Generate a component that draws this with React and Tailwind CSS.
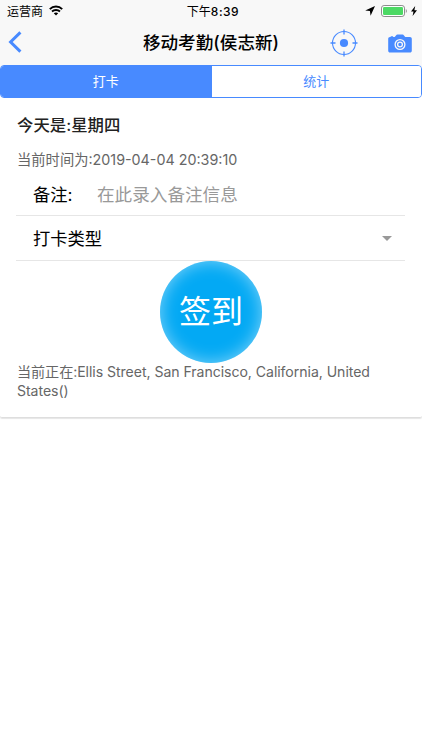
import React, { useState } from "react";

const StatusBar = () => (
  <div className="grid grid-cols-3 items-center h-5 pt-[3px] text-[12px] text-black">
    <div className="flex items-center gap-[6px] pl-[7px]">
      <span>运营商</span>
      <svg width="14" height="11" viewBox="0 0 14 11" fill="none" stroke="#000" strokeWidth="1.9" className="-mt-[3px]">
        <path d="M0.8 4.1C4.2 0.7 9.8 0.7 13.2 4.1" />
        <path d="M3 6.5c2.2-2.1 5.8-2.1 8 0" />
        <path d="M7 10.4 4.8 8.2c1.2-1.1 3.2-1.1 4.4 0z" fill="#000" stroke="none" />
      </svg>
    </div>
    <span className="pl-[4px] text-center whitespace-nowrap">
      下午<span className="font-medium tracking-[0.5px]">8:39</span>
    </span>
    <div className="flex items-center justify-end pr-[5px] -mt-[2px]">
      <svg width="10" height="10" viewBox="0 0 10 10" className="mr-[6px]">
        <path d="M10 0 5.6 9.8 4.9 5.1 0.2 4.5z" fill="#000" />
      </svg>
      <svg width="27" height="12" viewBox="0 0 27 12" className="mr-[3px]">
        <rect x="0.5" y="0.5" width="23" height="11" rx="2.6" fill="#fff" stroke="#8c8c8c" />
        <rect x="2" y="2" width="20" height="8" rx="1.2" fill="#4cd964" />
        <path d="M24.8 4v4c1.4-.6 1.4-3.4 0-4z" fill="#8c8c8c" />
      </svg>
      <svg width="6" height="10" viewBox="0 0 6 10">
        <path d="M4.2 0 0 5.6h2.5L1.6 10 6 4.2H3.4z" fill="#000" />
      </svg>
    </div>
  </div>
);

const NavBar = () => (
  <div className="grid grid-cols-[90px_1fr_90px] items-center h-[45px]">
    <button className="pl-[8px] -mt-[2px]" aria-label="back">
      <svg width="14" height="22" viewBox="0 0 14 22" fill="none">
        <path d="M12.4 1.4 2.6 11l9.8 9.6" stroke="#488aff" strokeWidth="3" />
      </svg>
    </button>
    <h1 className="pt-[2px] text-center text-[17.6px] font-medium text-black whitespace-nowrap">
      移动考勤(侯志新)
    </h1>
    <div className="flex items-center justify-between pr-[9px] pt-[1px]">
      <svg width="28" height="28" viewBox="0 0 28 28" fill="none" stroke="#488aff" className="-ml-[2px]">
        <circle cx="14" cy="14" r="11.5" strokeWidth="1.1" />
        <path d="M14 0.5v5M14 22.5v5M0.5 14h5M22.5 14h5" strokeWidth="1.3" />
        <circle cx="14" cy="14" r="4.1" fill="#488aff" stroke="none" />
      </svg>
      <svg width="24" height="19" viewBox="0 0 24 19" className="mr-[1px]">
        <path
          d="M2 3.1h.7v-.8h2.4v.8h1.6C7.7 2.4 8.2.6 9.5.6h5c1.3 0 1.8 1.8 2.8 2.5H22c1 0 1.8.8 1.8 1.8v11.8c0 1-.8 1.8-1.8 1.8H2c-1 0-1.8-.8-1.8-1.8V4.9c0-1 .8-1.8 1.8-1.8z"
          fill="#488aff"
        />
        <circle cx="12" cy="10.5" r="4.9" fill="none" stroke="#f8f8f8" strokeWidth="1.3" />
        <circle cx="12" cy="10.5" r="2.4" fill="none" stroke="#f8f8f8" strokeWidth="1.3" />
      </svg>
    </div>
  </div>
);

const App = () => {
  const [tab, setTab] = useState("clock");

  const tabClass = (name) =>
    tab === name
      ? "flex-1 bg-[#488aff] text-white"
      : "flex-1 bg-white text-[#488aff] border-l border-[#488aff]";

  return (
    <div className="min-h-[750px] bg-white font-['Inter','Noto_Sans_CJK_SC',sans-serif]">
      {/* HEADER */}
      <div className="bg-[#f8f8f8] h-[65px]">
        <StatusBar />
        <NavBar />
      </div>

      {/* TABS */}
      <div className="bg-linear-to-b from-[#f8f8f8] from-50% to-white to-50%">
        <div className="flex h-[33px] border border-[#488aff] rounded-[4px] overflow-hidden text-[13px]">
          <button className={tabClass("clock")} onClick={() => setTab("clock")}>
            打卡
          </button>
          <button className={tabClass("stats")} onClick={() => setTab("stats")}>
            统计
          </button>
        </div>
      </div>

      {/* CARD */}
      <div className="h-[320px] px-[17px] pt-[15px] rounded-b-[2px] border-b border-[#dedede] shadow-[0_1px_1px_rgba(0,0,0,0.1)]">
        <h2 className="h-6 leading-6 text-[16.4px] font-medium text-[#222]">今天是:星期四</h2>
        <p className="mt-[13px] h-5 leading-5 text-[14.3px] text-[#666]">
          当前时间为:2019-04-04 20:39:10
        </p>

        <div className="-ml-[1px] flex items-center h-[46px] pt-[5px] pl-[17px] border-b border-[#e6e6e6] text-[17.3px]">
          <label className="w-[64px] text-black">备注:</label>
          <input
            type="text"
            placeholder="在此录入备注信息"
            className="flex-1 min-w-0 text-[17.6px] outline-none placeholder:text-[#999]"
          />
        </div>
        <div className="-ml-[1px] flex items-center justify-between h-[45px] pl-[17px] pr-[13px] border-b border-[#e6e6e6] text-[17.3px] text-black">
          <span className="pt-[1px]">打卡类型</span>
          <svg width="10" height="5" viewBox="0 0 10 5">
            <path d="M0 0h10L5 5z" fill="#999" />
          </svg>
        </div>

        <button className="flex items-center justify-center mx-auto -mt-[0.5px] w-[102px] h-[102px] rounded-full bg-[#03a9f4] text-white text-[32px] shadow-[inset_0_0_17px_rgba(255,255,255,0.5)]">
          签到
        </button>
        <p className="-mt-[0.5px] leading-[19px] text-[14.1px] tracking-[-0.05px] text-[#666]">
          当前正在:Ellis Street, San Francisco, California, United States()
        </p>
      </div>
    </div>
  );
};

export default App;
